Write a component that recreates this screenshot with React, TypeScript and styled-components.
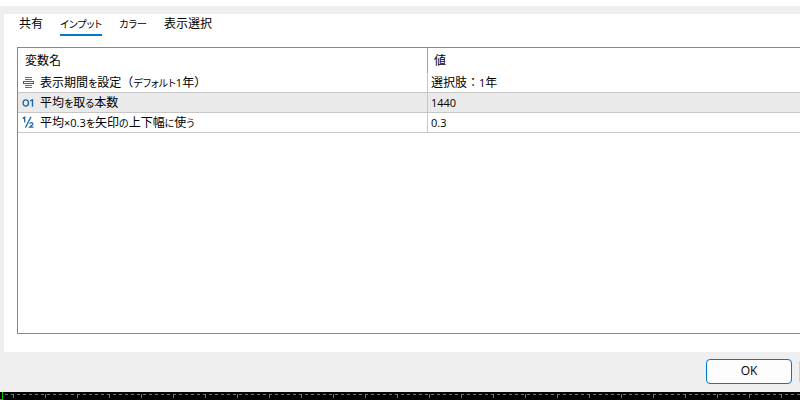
import React from "react";
import styled, { createGlobalStyle } from "styled-components";

const GlobalStyle = createGlobalStyle`
  * { box-sizing: border-box; }
  body {
    margin: 0;
    background: #efefef;
    color: #000;
    font: 12px/16px "Open Sans", "Noto Sans CJK JP", sans-serif;
  }
  button, table { font: inherit; color: inherit; }
`;

const Dialog = styled.div`
  display: flex;
  flex-direction: column;
  min-height: 100vh;
  overflow: hidden;
`;

const TitleBar = styled.header`
  height: 6px;
  background: #fff;
`;

const Page = styled.main`
  flex: 1;
  display: flex;
  flex-direction: column;
  margin: 8px 0 0 4px;
  padding-bottom: 18px;
  background: #fff;
`;

const TabList = styled.div`
  display: flex;
  gap: 17px;
  padding: 0 15px;
  height: 33px;
  align-items: flex-start;
`;

const Tab = styled.button<{ $active?: boolean }>`
  padding: 2px 0;
  border: 0;
  border-bottom: 2px solid ${(p) => (p.$active ? "#0078d4" : "transparent")};
  background: none;
  white-space: nowrap;
`;

const Frame = styled.section`
  flex: 1;
  margin-left: 13px;
  border: 1px solid #828790;
  border-right: 0;
`;

const Inputs = styled.table`
  width: 100%;
  table-layout: fixed;
  border-collapse: separate;
  border-spacing: 0;
`;

const NameColumn = styled.col`
  width: 409px;
`;

const Heading = styled.th`
  height: 25px;
  padding: 0 7px;
  font-weight: 400;
  text-align: left;
  & + & { border-left: 1px solid #a0a0a0; padding-left: 6px; }
`;

const Row = styled.tr<{ $striped?: boolean }>`
  background: ${(p) => (p.$striped ? "#eaeaea" : "#fff")};
`;

const Cell = styled.td<{ $divided?: boolean }>`
  height: 20px;
  padding: 0 4px;
  border-bottom: 1px solid #c6c6c6;
  white-space: nowrap;
  & + & {
    border-left: 1px solid ${(p) => (p.$divided ? "#c6c6c6" : "transparent")};
    padding-left: 3px;
  }
`;

const Label = styled.div`
  display: flex;
  align-items: center;
  gap: 5px;
  height: 16px;
`;

const Kana = styled.span`
  font-size: 10px;
  line-height: 1;
  font-feature-settings: "palt";
`;

const Figures = styled.span`
  font-size: 11px;
  line-height: 1;
`;

const Icon = styled.svg`
  flex: none;
  width: 13px;
  height: 14px;
  fill: none;
`;

const Footer = styled.footer`
  display: flex;
  justify-content: flex-end;
  gap: 7px;
  padding: 7px 0 8px;
  height: 40px;
`;

const Button = styled.button`
  width: 86px;
  padding: 0 0 1px;
  border: 1px solid #0078d4;
  border-radius: 4px;
  background: #fdfdfd;
`;

const ButtonEdge = styled.span`
  width: 1px;
  margin: 2px 0;
  background: #d0d0d0;
`;

const Ruler = styled.svg`
  display: block;
  width: 100%;
  height: 8px;
  background: #000;
`;

/* Kana and figures are set a little smaller than the kanji around them. */
const Mixed = ({ text }: { text: string }) => (
  <span>
    {text.split(/([ぁ-んァ-ヶー]+|[0-9.×]+)/).map((run, i) => {
      if (/^[ぁ-んァ-ヶー]/.test(run)) return <Kana key={i}>{run}</Kana>;
      if (/^[0-9.×]/.test(run)) return <Figures key={i}>{run}</Figures>;
      return run;
    })}
  </span>
);

const EnumIcon = () => (
  <Icon viewBox="0 0 13 14" aria-hidden="true">
    <path d="M3 1h7v1H3zM3 3h7v1H3zM3 9h7v1H3zM3 11h7v1H3z" fill="#d2453c" />
    <path d="M1 5h11v3H1zM2 6v1h9V6z" fill="#1f6aa5" fillRule="evenodd" />
  </Icon>
);

const IntegerIcon = () => (
  <Icon viewBox="0 0 13 14" aria-hidden="true">
    <ellipse cx="3.8" cy="7" rx="2.7" ry="3.1" stroke="#1f6aa5" strokeWidth="1.4" />
    <path d="M8.2 4.9 10.5 3.8v6.9" stroke="#1f6aa5" strokeWidth="1.4" />
  </Icon>
);

const FractionIcon = () => (
  <Icon viewBox="0 0 13 14" aria-hidden="true">
    <path d="M.8 2.4 2.7 1.2v5.4M9 .8 3.4 11.6M7.7 7.8c.4-1.5 3.2-1.5 3.2.1 0 1.1-1.9 1.8-3.2 3.2h3.8" stroke="#1f6aa5" strokeWidth="1.3" />
  </Icon>
);

const rows = [
  { icon: <EnumIcon />, name: "表示期間を設定（デフォルト1年）", value: "選択肢：1年" },
  { icon: <IntegerIcon />, name: "平均を取る本数", value: "1440" },
  { icon: <FractionIcon />, name: "平均×0.3を矢印の上下幅に使う", value: "0.3" },
];

const tabs = ["共有", "インプット", "カラー", "表示選択"];

export default function App() {
  return (
    <>
      <GlobalStyle />
      <Dialog lang="ja">
        <TitleBar />
        <Page>
          <TabList role="tablist">
            {tabs.map((tab, i) => (
              <Tab key={tab} type="button" role="tab" aria-selected={i === 1} $active={i === 1}>
                <Mixed text={tab} />
              </Tab>
            ))}
          </TabList>
          <Frame>
            <Inputs>
              <colgroup>
                <NameColumn />
                <col />
              </colgroup>
              <thead>
                <tr>
                  <Heading scope="col">変数名</Heading>
                  <Heading scope="col">値</Heading>
                </tr>
              </thead>
              <tbody>
                {rows.map((row, i) => (
                  <Row key={row.name} $striped={i % 2 === 1}>
                    <Cell>
                      <Label>
                        {row.icon}
                        <Mixed text={row.name} />
                      </Label>
                    </Cell>
                    <Cell $divided={i > 0}>
                      <Mixed text={row.value} />
                    </Cell>
                  </Row>
                ))}
              </tbody>
            </Inputs>
          </Frame>
        </Page>
        <Footer>
          <Button type="button">OK</Button>
          <ButtonEdge />
        </Footer>
        <Ruler aria-hidden="true" shapeRendering="crispEdges">
          <defs>
            <pattern id="ticks" x="13" width="32" height="8" patternUnits="userSpaceOnUse">
              <path d="M0 2h1v4h-1z" fill="#6b7480" />
            </pattern>
            <pattern id="dashes" x="5" width="6" height="8" patternUnits="userSpaceOnUse">
              <path d="M0 2h3v1h-3z" fill="#6b7480" />
            </pattern>
          </defs>
          <rect x="5" width="100%" height="8" fill="url(#dashes)" />
          <rect x="5" width="100%" height="8" fill="url(#ticks)" />
          <path d="M2 0h1v8h-1zM0 7h2v1h-2z" fill="#00c800" />
        </Ruler>
      </Dialog>
    </>
  );
}
